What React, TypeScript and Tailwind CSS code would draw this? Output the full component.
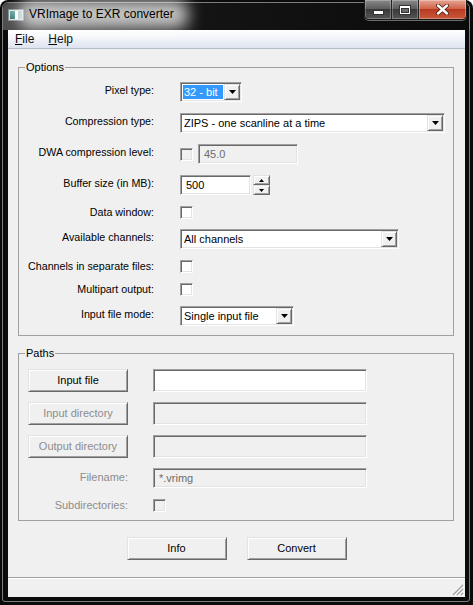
import React from 'react';

const sunken =
  'border border-t-[#a0a0a0] border-l-[#a0a0a0] border-r-white border-b-white shadow-[inset_1px_1px_0_#696969,inset_-1px_-1px_0_#e3e3e3]';
const raised =
  'border border-t-[#e3e3e3] border-l-[#e3e3e3] border-r-[#696969] border-b-[#696969] shadow-[inset_1px_1px_0_#fff,inset_-1px_-1px_0_#a0a0a0]';

function DropButton() {
  return (
    <div className={`w-[16px] h-[16px] shrink-0 bg-[#f0f0f0] flex items-center justify-center ${raised}`}>
      <svg width="7" height="4" viewBox="0 0 7 4">
        <path d="M0 0h7L3.5 4z" fill="#000" />
      </svg>
    </div>
  );
}

function Combo({ className, text, selected }: { className: string; text: string; selected?: boolean }) {
  return (
    <div className={`h-[20px] bg-white flex p-px ${sunken} ${className}`}>
      {selected ? (
        <div className="flex-1 p-px flex">
          <span className="flex-1 bg-[#3399ff] text-white flex items-center pl-px">{text}</span>
        </div>
      ) : (
        <span className="flex-1 flex items-center pl-[2px] whitespace-nowrap">{text}</span>
      )}
      <DropButton />
    </div>
  );
}

function Check({ disabled }: { disabled?: boolean }) {
  return <div className={`w-[13px] h-[13px] shrink-0 ${sunken} ${disabled ? 'bg-[#f0f0f0]' : 'bg-white'}`} />;
}

function Field({ className, text, disabled, height = 'h-[20px]' }: { className: string; text?: string; disabled?: boolean; height?: string }) {
  return (
    <div
      className={`${height} flex items-center pl-[4px] p-px ${sunken} ${className} ${
        disabled ? 'bg-[#f0f0f0] text-[#6d6d6d]' : 'bg-white'
      }`}
    >
      <span className="pl-px">{text}</span>
    </div>
  );
}

function Button({ label, disabled, className = '' }: { label: string; disabled?: boolean; className?: string }) {
  return (
    <div
      className={`w-[100px] h-[23px] bg-[#f0f0f0] flex items-center justify-center ${raised} ${className} ${
        disabled ? 'text-[#8d8d8d]' : 'text-black'
      }`}
    >
      {label}
    </div>
  );
}

function Row({ label, children, h, mt, nudge }: { label: string; children: React.ReactNode; h: string; mt: string; nudge?: boolean }) {
  return (
    <div className={`flex items-center ${h} ${mt}`}>
      <div className={`w-[135px] text-right whitespace-nowrap text-[10.7px] ${nudge ? 'pb-[4px]' : ''}`}>{label}</div>
      <div className="ml-[26px] flex items-center gap-[5px]">{children}</div>
    </div>
  );
}

function SpinBox() {
  return (
    <div className="flex items-center gap-[2px]">
      <Field className="w-[71px]" text="500" />
      <div className="flex flex-col w-[17px] h-[20px]">
        {['M0 3L2.5 0L5 3z', 'M0 0h5L2.5 3z'].map((d, i) => (
          <div key={i} className={`h-[10px] bg-[#f0f0f0] flex items-center justify-center ${raised}`}>
            <svg width="5" height="3" viewBox="0 0 5 3">
              <path d={d} fill="#000" />
            </svg>
          </div>
        ))}
      </div>
    </div>
  );
}

function TitleBar() {
  return (
    <div className="h-[27px] shrink-0 flex items-start bg-[linear-gradient(90deg,#4e4e4e,#2c2c2c_12%,#141414_42%,#0b0b0b)] rounded-t-[6px]">
      <div className="h-[24px] flex items-center pl-[5px]">
        <svg width="16" height="12" viewBox="0 0 16 12">
          <defs>
            <linearGradient id="ic" x1="0" y1="0" x2="0" y2="1">
              <stop offset="0" stopColor="#5fa6a0" />
              <stop offset="1" stopColor="#2e6f6c" />
            </linearGradient>
          </defs>
          <rect x="0.5" y="0.5" width="15" height="11" fill="#d9dedf" stroke="#7e8b8f" />
          <rect x="2" y="2" width="5" height="8" fill="url(#ic)" />
          <rect x="7" y="2" width="3" height="8" fill="#ffffff" />
          <rect x="10" y="2" width="4" height="8" fill="#a9c7c8" />
        </svg>
        <span className="relative ml-[5px] pb-[2px]">
          <span className="absolute -left-[10px] -right-[14px] -top-[5px] -bottom-[4px] bg-white/75 blur-[8px] rounded-[10px]" />
          <span className="relative text-[12px] text-black">VRImage to EXR converter</span>
        </span>
      </div>
      <div className="ml-auto mr-[2px] -mt-[3px] h-[20px] flex rounded-b-[5px] border border-[#1a1a1a] border-t-0 overflow-hidden shadow-[0_1px_0_#6a6a6a]">
        <div className="w-[27px] flex items-center justify-center border-r border-[#222] bg-[linear-gradient(#8a8a8a,#5e5e5e_45%,#3a3a3a_50%,#555)] shadow-[inset_0_0_0_1px_rgba(255,255,255,0.25)]">
          <svg width="11" height="5" viewBox="0 0 11 5" className="mt-[5px]">
            <rect x="0.5" y="0.5" width="10" height="4" fill="#fff" stroke="#333" />
          </svg>
        </div>
        <div className="w-[27px] flex items-center justify-center border-r border-[#222] bg-[linear-gradient(#8a8a8a,#5e5e5e_45%,#3a3a3a_50%,#555)] shadow-[inset_0_0_0_1px_rgba(255,255,255,0.25)]">
          <svg width="12" height="10" viewBox="0 0 12 10">
            <rect x="0.5" y="0.5" width="11" height="9" fill="#fff" stroke="#333" />
            <rect x="2.5" y="3.5" width="7" height="4" fill="#6a6a6a" stroke="#333" />
          </svg>
        </div>
        <div className="w-[47px] flex items-center justify-center bg-[linear-gradient(#e6a594,#d0644c_45%,#b73a20_50%,#c95a3c)] shadow-[inset_0_0_0_1px_rgba(255,255,255,0.3)]">
          <svg width="13" height="11" viewBox="0 0 13 11">
            <path d="M2 1.5L11 9.5M11 1.5L2 9.5" stroke="#4a1a10" strokeWidth="4" strokeLinecap="round" />
            <path d="M2 1.5L11 9.5M11 1.5L2 9.5" stroke="#fff" strokeWidth="2.4" strokeLinecap="round" />
          </svg>
        </div>
      </div>
    </div>
  );
}

function SizeGrip() {
  return (
    <svg width="12" height="12" viewBox="0 0 12 12" className="self-end mb-[1px] mr-[1px]">
      <path d="M11 1L1 11M11 5L5 11M11 9L9 11" stroke="#a0a0a0" strokeWidth="1.2" />
      <path d="M12 2L2 12M12 6L6 12M12 10L10 12" stroke="#ffffff" strokeWidth="1" />
    </svg>
  );
}

export default function App() {
  return (
    <div className="w-[473px] h-[605px] bg-[#0b0b0b] rounded-t-[8px] pt-[2px] pl-[2px] pr-[3px] pb-[3px] font-['Liberation_Sans',Arial,sans-serif] text-[11px] text-black select-none">
      <div className="h-full flex flex-col rounded-t-[6px] rounded-b-[3px] border border-[#7d7d7d] bg-[#0b0b0b]">
        <TitleBar />
        <div className="flex-1 ml-[5px] mr-[4px] mb-[4px] bg-[#f0f0f0] flex flex-col">
          {/* menu bar */}
          <div className="h-[19px] shrink-0 flex items-center border-b border-[#b4bccc] bg-[linear-gradient(#ffffff,#f4f6fa_40%,#dde3ef)] text-[12px]">
            <span className="px-[7px]">
              <span className="underline">F</span>ile
            </span>
            <span className="px-[7px]">
              <span className="underline">H</span>elp
            </span>
          </div>

          <fieldset className="ml-[10px] mt-[11px] w-[436px] border border-[#a0a0a0] pt-[8px] pb-[9px]">
            <legend className="ml-[6px] px-px leading-[14px] text-[11px]">Options</legend>
            <Row label="Pixel type:" h="h-[20px]" mt="" nudge>
              <Combo className="w-[62px]" text="32 - bit" selected />
            </Row>
            <Row label="Compression type:" h="h-[20px]" mt="mt-[11px]" nudge>
              <Combo className="w-[265px]" text="ZIPS - one scanline at a time" />
            </Row>
            <Row label="DWA compression level:" h="h-[20px]" mt="mt-[11px]" nudge>
              <Check disabled />
              <Field className="w-[100px]" text="45.0" disabled />
            </Row>
            <Row label="Buffer size (in MB):" h="h-[20px]" mt="mt-[11px]" nudge>
              <SpinBox />
            </Row>
            <Row label="Data window:" h="h-[13px]" mt="mt-[11px]">
              <Check />
            </Row>
            <Row label="Available channels:" h="h-[20px]" mt="mt-[10px]" nudge>
              <Combo className="w-[219px]" text="All channels" />
            </Row>
            <Row label="Channels in separate files:" h="h-[13px]" mt="mt-[11px]">
              <Check />
            </Row>
            <Row label="Multipart output:" h="h-[13px]" mt="mt-[10px]">
              <Check />
            </Row>
            <Row label="Input file mode:" h="h-[20px]" mt="mt-[10px]" nudge>
              <Combo className="w-[114px]" text="Single input file" />
            </Row>
          </fieldset>

          <fieldset className="ml-[10px] mt-[10px] w-[436px] border border-[#a0a0a0] pt-[9px] pb-[8px] pl-[9px]">
            <legend className="-ml-[3px] px-px leading-[14px] text-[11px]">Paths</legend>
            <div className="flex items-center gap-[25px]">
              <Button label="Input file" />
              <Field className="w-[214px]" height="h-[23px]" />
            </div>
            <div className="flex items-center gap-[25px] mt-[10px]">
              <Button label="Input directory" disabled />
              <Field className="w-[214px]" height="h-[23px]" disabled />
            </div>
            <div className="flex items-center gap-[25px] mt-[10px]">
              <Button label="Output directory" disabled />
              <Field className="w-[214px]" height="h-[23px]" disabled />
            </div>
            <div className="flex items-center gap-[25px] mt-[10px] h-[20px]">
              <div className="w-[100px] text-right text-[#8d8d8d] pb-[2px]">Filename:</div>
              <Field className="w-[214px]" text="*.vrimg" disabled />
            </div>
            <div className="flex items-center gap-[25px] mt-[11px] h-[13px]">
              <div className="w-[100px] text-right text-[#8d8d8d]">Subdirectories:</div>
              <Check disabled />
            </div>
          </fieldset>

          <div className="flex justify-center gap-[20px] mt-[16px]">
            <Button label="Info" />
            <Button label="Convert" />
          </div>

          <div className="mt-auto h-[20px] border-t border-[#a0a0a0] shadow-[inset_0_1px_0_#fff] flex justify-end">
            <SizeGrip />
          </div>
        </div>
      </div>
    </div>
  );
}
